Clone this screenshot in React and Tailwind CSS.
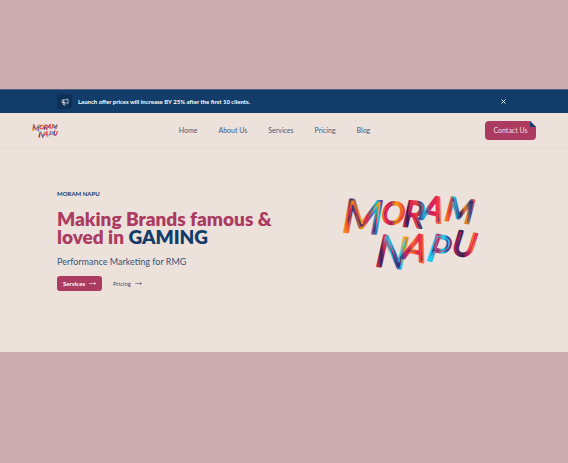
import { useId } from "react";
import { Megaphone, MoveRight, X } from "lucide-react";

const links = ["Home", "About Us", "Services", "Pricing", "Blog"];

const letters = [
  { char: "M", x: 0, y: 40, size: 46, turn: 3, colors: ["#f58a1c", "#f0502f", "#3a2f7c", "#f79a12", "#e02a4f", "#2b6cb6", "#1bc8e8", "#7d2467"] },
  { char: "O", x: 38, y: 30, size: 31, turn: 10, colors: ["#f58a1c", "#e8234f", "#a02060", "#f79a12", "#f9562b", "#e8234f"] },
  { char: "R", x: 60, y: 34, size: 36, turn: 6, colors: ["#e3234f", "#2c2350", "#e31c56", "#e3413a", "#283b7c", "#20b9de"] },
  { char: "A", x: 78, y: 27, size: 35, turn: 12, colors: ["#28489a", "#2ab9dd", "#d3245e", "#e8234f", "#f9762b", "#e51d55"] },
  { char: "M", x: 102, y: 28, size: 33, turn: 8, colors: ["#f9762b", "#f0402f", "#1bb8de", "#3a1f5c", "#f58a1c", "#28489a", "#f3613a"] },
  { char: "N", x: 33, y: 74, size: 44, turn: 6, colors: ["#e02a4f", "#33245e", "#e02a4f", "#1bd0ec", "#28489a", "#1bd0ec", "#f79a12", "#f58a1c"] },
  { char: "A", x: 60, y: 66, size: 37, turn: 12, colors: ["#28489a", "#e3234f", "#f9762b", "#e8234f", "#f9762b", "#e8234f"] },
  { char: "P", x: 84, y: 68, size: 38, turn: 12, colors: ["#1fd2ef", "#1fc5ee", "#d21f5c", "#25d7ee", "#28489a", "#e3234f"] },
  { char: "U", x: 109, y: 62, size: 34, turn: 10, colors: ["#e3234f", "#672058", "#2c2350", "#e31c56", "#f0732f", "#e8234f"] },
];

function BrushLogo({ className }) {
  const id = useId();
  return (
    <svg viewBox="0 0 136 78" className={className} role="img" aria-label="Moram Napu">
      <defs>
        {letters.map(({ colors }, i) => (
          <linearGradient key={i} id={id + "paint" + i} x1="0" y1="0.6" x2="1" y2="0.3">
            {colors.map((color, n) => (
              <stop key={n} offset={n / (colors.length - 1)} stopColor={color} />
            ))}
          </linearGradient>
        ))}
        {letters.map(({ colors }, i) => (
          <linearGradient key={i} id={id + "core" + i} x1="0.2" y1="0.2" x2="0" y2="0.9">
            <stop offset="0" stopColor={colors[3]} />
            <stop offset="0.3" stopColor="#e8234f" />
            <stop offset="0.5" stopColor="#43246e" />
            <stop offset="0.7" stopColor={colors[1]} />
            <stop offset="0.9" stopColor={colors[0]} />
          </linearGradient>
        ))}
      </defs>
      {letters.map(({ char, x, y, size, turn }, i) => (
        <text
          key={i}
          x={x}
          y={y}
          fontSize={size}
          transform={`rotate(${turn} ${x} ${y})`}
          fill={`url(#${id}core${i})`}
          stroke={`url(#${id}paint${i})`}
          strokeWidth="2"
          strokeLinejoin="round"
          className="font-['Lato',sans-serif] italic"
        >
          {char}
        </text>
      ))}
    </svg>
  );
}

export default function App() {
  return (
    <div className="min-h-screen bg-[#cbadb0] py-[89px] font-['Lato',sans-serif]">
      <div className="bg-[#ede1dc]">
        <div className="flex h-6 items-center justify-between border-t border-[#51607f] bg-[#123c69] pr-[61px] pl-[57px] text-white">
          <div className="flex items-center gap-[6px]">
            <span className="flex size-[15px] items-center justify-center rounded-[3px] bg-[#0e3056]">
              <Megaphone className="size-2" strokeWidth={2} />
            </span>
            <p className="text-[6px] font-bold whitespace-nowrap">
              Launch offer prices will increase BY 25% after the first 10 clients.
            </p>
          </div>
          <button type="button" aria-label="Dismiss">
            <X className="size-[7px]" strokeWidth={3} />
          </button>
        </div>

        <header className="flex h-[35px] items-center justify-between border-b border-[#e5dad7] px-8">
          <a href="#home">
            <BrushLogo className="h-[15px] w-[26px] overflow-visible" />
          </a>
          <nav className="flex items-center gap-[21px] pl-[6px] text-[7px] text-[#425b7c]">
            {links.map((link) => (
              <a key={link} href={"#" + link.toLowerCase().replace(" ", "-")}>
                {link}
              </a>
            ))}
          </nav>
          <button
            type="button"
            className="relative h-[19px] w-[51px] rounded-[4px] bg-[#ac3b61] text-[7px] whitespace-nowrap text-[#f3dfe2]"
          >
            Contact Us
            <svg viewBox="0 0 6 6" className="absolute top-0 right-0 size-[6px]" aria-hidden="true">
              <path d="M0 0H6V6Z" fill="#ede1dc" />
              <path d="M0 0L6 6H1Q0 6 0 5Z" fill="#123c69" />
            </svg>
          </button>
        </header>

        <main className="flex items-start justify-between pt-10 pr-[90px] pb-[61px] pl-[57px]">
          <div className="text-[#123c69]">
            <p className="text-[6px] leading-[12px] font-bold">MORAM NAPU</p>
            <h1 className="mt-[10px] text-[19px] leading-[18px] font-extrabold whitespace-nowrap text-[#ac3b61]">
              Making Brands famous &amp;
              <br />
              loved in <span className="text-[#123c69]">GAMING</span>
            </h1>
            <p className="mt-[9px] text-[9px] leading-[14px] text-[#345679]">
              Performance Marketing for RMG
            </p>
            <div className="mt-[7px] flex h-[15px] items-stretch gap-[11px] text-[6px]">
              <button
                type="button"
                className="flex w-[45px] items-center justify-center gap-1 rounded-[3px] bg-[#ac3b61] font-bold text-white"
              >
                Services <MoveRight className="size-[7px]" strokeWidth={2} />
              </button>
              <a href="#pricing" className="flex items-center gap-1 text-[#4c4c5c]">
                Pricing <MoveRight className="size-[7px]" strokeWidth={2} />
              </a>
            </div>
          </div>
          <BrushLogo className="mt-1 h-[78px] w-[136px] shrink-0 overflow-visible" />
        </main>
      </div>
    </div>
  );
}
